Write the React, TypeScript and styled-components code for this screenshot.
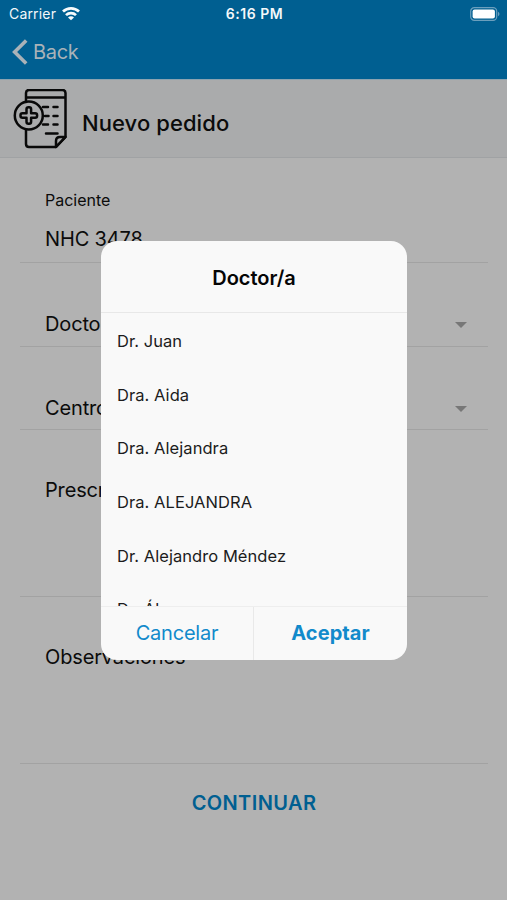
import React from "react";
import styled, { createGlobalStyle } from "styled-components";

const GlobalStyle = createGlobalStyle`
  * { box-sizing: border-box; }
  body { margin: 0; background: #b2b2b2; }
  button { font: inherit; border: 0; padding: 0; background: none; }
`;

const Screen = styled.div`
  position: relative;
  width: 507px;
  height: 900px;
  overflow: hidden;
  background: #b2b2b2;
  color: #0b0b0b;
  font-family: Inter, "Liberation Sans", sans-serif;
  white-space: nowrap;
`;

const TopBar = styled.header`
  height: 79px;
  background: #005f91;
`;

const StatusBar = styled.div`
  display: grid;
  grid-template-columns: 1fr auto 1fr;
  align-items: center;
  height: 27px;
  padding: 0 7px 0 9px;
  color: #f4f8fa;
  font-size: 14px;
  line-height: 27px;
`;

const Carrier = styled.div`
  display: flex;
  align-items: center;
  gap: 6px;
  letter-spacing: 0.17px;
`;

const Clock = styled.div`
  font-weight: 600;
  letter-spacing: 0.5px;
`;

const BatterySlot = styled.div`
  display: flex;
  justify-content: flex-end;
`;

const BackButton = styled.button`
  display: flex;
  align-items: center;
  gap: 5px;
  height: 50px;
  padding-left: 12px;
  color: #a9b2b8;
  font-size: 20px;
  letter-spacing: -0.3px;
`;

const TitleBar = styled.div`
  display: flex;
  align-items: center;
  height: 79px;
  padding: 0 0 0 13px;
  gap: 14px;
  background: #aaabac;
  border-top: 1px solid #8ba3b0;
  border-bottom: 1px solid #a0a2a4;
`;

const Title = styled.h1`
  margin: 9px 0 0;
  font-size: 22px;
  font-weight: 500;
  letter-spacing: 0.08px;
`;

const Form = styled.main`
  display: flex;
  flex-direction: column;
  padding: 0 19px 0 20px;
`;

const Field = styled.div<{ $height: number; $top: number }>`
  display: flex;
  flex-direction: column;
  height: ${(p) => p.$height}px;
  padding: ${(p) => p.$top}px 21px 0 25px;
  border-bottom: 1px solid #a2a2a2;
`;

const FieldLabel = styled.span`
  font-size: 16px;
  line-height: 20px;
  letter-spacing: 0;
`;

const FieldValue = styled.div<{ $gap?: number }>`
  display: flex;
  align-items: center;
  justify-content: space-between;
  margin-top: ${(p) => p.$gap ?? 0}px;
  font-size: 20px;
  line-height: 24px;
  letter-spacing: -0.15px;
`;

const Caret = styled.i`
  margin-top: 2px;
  border: 6px solid transparent;
  border-top-color: #777;
  border-bottom: 0;
`;

const Continue = styled.button`
  height: 77px;
  color: #005f91;
  font-size: 20px;
  font-weight: 600;
  letter-spacing: 0.4px;
`;

const DialogLayer = styled.div`
  position: absolute;
  inset: 0;
  display: flex;
  justify-content: center;
  align-items: flex-start;
  padding-top: 241px;
`;

const Dialog = styled.section`
  display: flex;
  flex-direction: column;
  width: 306px;
  height: 419px;
  margin-left: 1px;
  overflow: hidden;
  border-radius: 16px;
  background: #f9f9f9;
`;

const DialogTitle = styled.h2`
  flex: none;
  height: 72px;
  margin: 0;
  border-bottom: 1px solid #e8e8e8;
  font-size: 20px;
  font-weight: 600;
  line-height: 74px;
  text-align: center;
  color: #050505;
  letter-spacing: -0.05px;
`;

const Options = styled.ul`
  flex: 1;
  min-height: 0;
  margin: 0;
  padding: 1px 16px 0;
  overflow: hidden;
  list-style: none;
`;

const Option = styled.li`
  height: 53.7px;
  font-size: 16.5px;
  line-height: 54px;
  letter-spacing: 0.06px;
  color: #1c1c1c;
`;

const Actions = styled.div`
  display: grid;
  grid-template-columns: 152px 1fr;
  flex: none;
  height: 54px;
  border-top: 1px solid #eeeeee;
`;

const Action = styled.button<{ $primary?: boolean }>`
  border-left: ${(p) => (p.$primary ? "1px solid #e9e9e9" : "0")};
  padding-bottom: 1px;
  color: #128acb;
  font-size: 20px;
  font-weight: ${(p) => (p.$primary ? 700 : 400)};
  letter-spacing: ${(p) => (p.$primary ? "0.05px" : "-0.2px")};
`;

const doctors = [
  "Dr. Juan",
  "Dra. Aida",
  "Dra. Alejandra",
  "Dra. ALEJANDRA",
  "Dr. Alejandro Méndez",
  "Dr. Álvaro",
];

const WifiIcon = () => (
  <svg width="18" height="14" viewBox="0 0 18 14" fill="none" stroke="#f8fbfc" strokeWidth="2.7">
    <path d="M1 4.600C5.5.3 12.500.3 17 4.600" />
    <path d="M4 8.100c2.8-2.7 7.2-2.7 10 0" />
    <path d="M9 13.300 6 10.400c1.6-1.5 4.4-1.5 6 0Z" fill="#f8fbfc" stroke="none" />
  </svg>
);

const BatteryIcon = () => (
  <svg width="30" height="14" viewBox="0 0 30 14">
    <rect x=".7" y=".7" width="26" height="12.6" rx="3.6" fill="none" stroke="#6b9fbd" strokeWidth="1.2" />
    <rect x="2.6" y="2.5" width="22.3" height="9" rx="2" fill="#fff" />
    <path d="M28 4.8c2 .8 2 3.6 0 4.4Z" fill="#6b9fbd" />
  </svg>
);

const BackIcon = () => (
  <svg width="16" height="26" viewBox="0 0 16 26" fill="none" stroke="#a9b2b8" strokeWidth="3.6">
    <path d="M14.2 1.4 2.6 13l11.6 11.6" />
  </svg>
);

const OrderIcon = () => (
  <svg width="55" height="60" viewBox="0 0 55 60" fill="none" stroke="#090909" strokeWidth="2.5" strokeLinecap="round" strokeLinejoin="round">
    <path d="M13 13V4q0-3 3-3h33.500q3 0 3 3v44L43 58H16q-3 0-3-3V41M13 8.500h39.500" />
    <path d="M43 58v-6q0-4 4-4h5.500Z" />
    <circle cx="15.800" cy="26.500" r="14" />
    <path d="M13.500 24.200v-4q0-2 2-2h.6q2 0 2 2v4h4q2 0 2 2v.6q0 2-2 2h-4v4q0 2-2 2h-.6q-2 0-2-2v-4h-4q-2 0-2-2v-.6q0-2 2-2Z" />
    <path d="M30 18h5M40.500 18h4M32 27h3.500M40.500 27h4M30 35.500h5M40.500 35.500h4M33 44.500h11.500" />
  </svg>
);

export default function App() {
  return (
    <>
      <GlobalStyle />
      <Screen>
        <TopBar>
          <StatusBar>
            <Carrier>Carrier <WifiIcon /></Carrier>
            <Clock>6:16 PM</Clock>
            <BatterySlot><BatteryIcon /></BatterySlot>
          </StatusBar>
          <BackButton><BackIcon />Back</BackButton>
        </TopBar>
        <TitleBar>
          <OrderIcon />
          <Title>Nuevo pedido</Title>
        </TitleBar>
        <Form>
          <Field $height={105} $top={32}>
            <FieldLabel>Paciente</FieldLabel>
            <FieldValue $gap={17}>NHC 3478</FieldValue>
          </Field>
          <Field $height={84} $top={49}>
            <FieldValue>Doctor/a <Caret /></FieldValue>
          </Field>
          <Field $height={83} $top={49}>
            <FieldValue>Centro <Caret /></FieldValue>
          </Field>
          <Field $height={167} $top={48}>
            <FieldValue>Prescripción</FieldValue>
          </Field>
          <Field $height={167} $top={48}>
            <FieldValue>Observaciones</FieldValue>
          </Field>
          <Continue>CONTINUAR</Continue>
        </Form>
        <DialogLayer>
          <Dialog role="dialog" aria-label="Doctor/a">
            <DialogTitle>Doctor/a</DialogTitle>
            <Options>
              {doctors.map((name) => <Option key={name}>{name}</Option>)}
            </Options>
            <Actions>
              <Action>Cancelar</Action>
              <Action $primary>Aceptar</Action>
            </Actions>
          </Dialog>
        </DialogLayer>
      </Screen>
    </>
  );
}
